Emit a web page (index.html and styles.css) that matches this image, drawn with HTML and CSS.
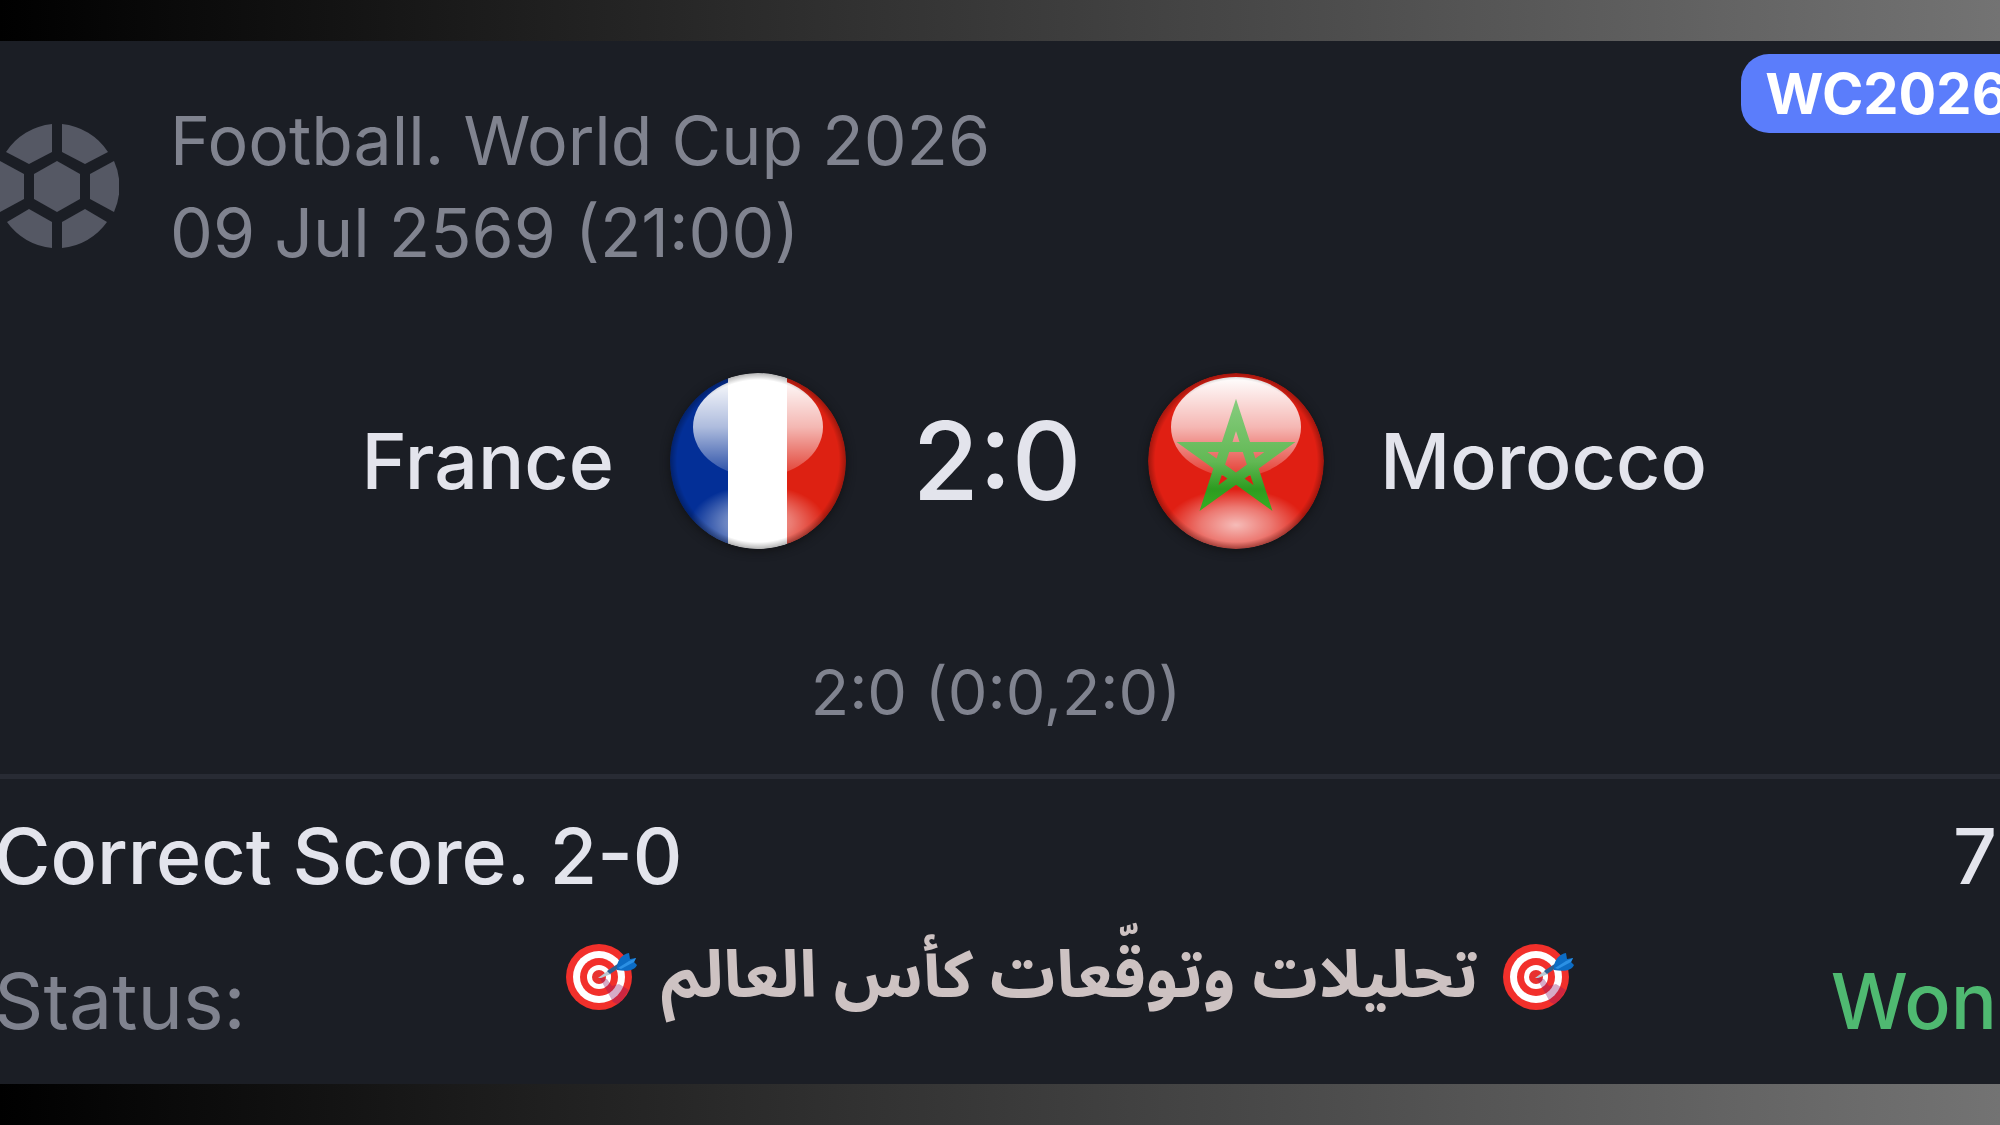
FILE: index.html
```html
<!DOCTYPE html>
<html lang="en">
<head>
<meta charset="utf-8">
<meta name="viewport" content="width=device-width, initial-scale=1">
<title>World Cup 2026: France – Morocco</title>
<link rel="stylesheet" href="styles.css">
</head>
<body>
<svg width="0" height="0" class="defs" aria-hidden="true">
  <defs>
    <linearGradient id="gloss" x1="0" y1="0" x2="0" y2="1">
      <stop offset="0" stop-color="#fff" stop-opacity="1"/>
      <stop offset="0.5" stop-color="#fff" stop-opacity="0.68"/>
      <stop offset="1" stop-color="#fff" stop-opacity="0.12"/>
    </linearGradient>
    <radialGradient id="glow">
      <stop offset="0" stop-color="#fff" stop-opacity="0.7"/>
      <stop offset="0.5" stop-color="#fff" stop-opacity="0.4"/>
      <stop offset="1" stop-color="#fff" stop-opacity="0"/>
    </radialGradient>
    <radialGradient id="rim">
      <stop offset="0.92" stop-color="#000" stop-opacity="0"/>
      <stop offset="1" stop-color="#000" stop-opacity="0.3"/>
    </radialGradient>
    <linearGradient id="green" gradientUnits="userSpaceOnUse" x1="0" y1="-60" x2="0" y2="50">
      <stop offset="0" stop-color="#86cc7e"/>
      <stop offset="0.55" stop-color="#62b854"/>
      <stop offset="0.8" stop-color="#2d9c20"/>
      <stop offset="1" stop-color="#36b022"/>
    </linearGradient>
    <clipPath id="disc"><circle r="88"/></clipPath>
    <clipPath id="board"><circle cx="34" cy="36" r="33"/></clipPath>
    <symbol id="target" viewBox="0 0 72 72">
      <circle cx="34" cy="36" r="33" fill="#f2302b"/>
      <circle cx="34" cy="36" r="26" fill="#fff"/>
      <circle cx="34" cy="36" r="19" fill="#f2302b"/>
      <circle cx="34" cy="36" r="12" fill="#fff"/>
      <circle cx="34" cy="36" r="7" fill="#e8322f"/>
      <path d="M34 36L42 38L47 45L54 43L64 49L54 64L48 61L42 50Z" fill="#8e1766" fill-opacity="0.36" clip-path="url(#board)"/>
      <path d="M33 37L44 29L46 33L36 37Z" fill="#b9c8d3"/>
      <path d="M42 30L54 22L57 25L45 33Z" fill="#2d5f91"/>
      <path d="M52 25C53 18 58 13 64 12L65 18L71 17L69 21L72 24C70 29 63 31 52 29Z" fill="#0c6cc4"/>
      <path d="M53 27L64 20L71 17L69 21L56 28Z" fill="#2b90e4"/>
    </symbol>
  </defs>
</svg>
<main class="page">
  <article class="ticket">
    <header class="event">
      <svg class="event-icon" viewBox="-62 -62 124 124" aria-hidden="true">
        <path d="M0-25L23-12V13L0 26L-23 13V-12Z"/>
        <path d="M-5-62V-34L-28-22L-51-34A62 62 0 0 1-5-62Z"/>
        <path d="M5-62V-34L28-22L51-34A62 62 0 0 0 5-62Z"/>
        <path d="M-5 62V36L-28 23L-50 36A62 62 0 0 0-5 62Z"/>
        <path d="M5 62V36L28 23L50 36A62 62 0 0 1 5 62Z"/>
        <path d="M57-25L33-12V13L57 26A62 62 0 0 0 57-25Z"/>
        <path d="M-57-25L-33-12V13L-57 26A62 62 0 0 1-57-25Z"/>
      </svg>
      <div class="event-text">
        <div>Football. World Cup 2026</div>
        <div>09 Jul 2569 (21:00)</div>
      </div>
      <span class="badge">WC2026</span>
    </header>
    <section class="match">
      <span class="team home">France</span>
      <svg class="flag" viewBox="-88 -88 176 176" role="img" aria-label="Flag of France">
        <g clip-path="url(#disc)">
          <path d="M-88-88H-29V88H-88Z" fill="#032f97"/>
          <path d="M29-88H88V88H29Z" fill="#dd2112"/>
          <ellipse cy="62" rx="68" ry="38" fill="url(#glow)"/>
          <path d="M-30-88H29V88H-30Z" fill="#fff"/>
          <ellipse cy="-34" rx="65" ry="50" fill="url(#gloss)"/>
          <circle r="88" fill="url(#rim)"/>
        </g>
      </svg>
      <strong class="score">2:0</strong>
      <svg class="flag" viewBox="-88 -88 176 176" role="img" aria-label="Flag of Morocco">
        <g clip-path="url(#disc)">
          <circle r="88" fill="#e01f13"/>
          <ellipse cy="64" rx="70" ry="36" fill="url(#glow)"/>
          <ellipse cy="-34" rx="65" ry="50" fill="url(#gloss)"/>
          <path d="M0-46L27 37L-44-14H44L-27 37Z" fill="none" stroke="url(#green)" stroke-width="10"/>
          <circle r="88" fill="url(#rim)"/>
        </g>
      </svg>
      <span class="team">Morocco</span>
    </section>
    <div class="periods">2:0 (0:0,2:0)</div>
    <section class="bet">
      <div class="row outcome">
        <span>Correct Score. 2-0</span>
        <span>7</span>
      </div>
      <div class="row status">
        <span class="label">Status:</span>
        <div class="caption" lang="ar" dir="rtl">
          <svg class="target" aria-hidden="true"><use href="#target"/></svg>
          <span>تحليلات وتوقّعات كأس العالم</span>
          <svg class="target" aria-hidden="true"><use href="#target"/></svg>
        </div>
        <span class="won">Won</span>
      </div>
    </section>
  </article>
</main>
</body>
</html>
```
FILE: styles.css
```css
* {
  box-sizing: border-box;
}

body {
  margin: 0;
  background: linear-gradient(to right, #000, #737373);
  font-family: Inter, "Liberation Sans", sans-serif;
  overflow-x: hidden;
}

.defs {
  position: absolute;
}

.page {
  min-height: 100vh;
  padding: 41px 0;
}

.ticket {
  background: #1b1e25;
  color: #e3e4ec;
  overflow: hidden;
}

.event {
  position: relative;
  display: flex;
  align-items: center;
  gap: 51px;
  padding-top: 53px;
  margin-left: -5px;
  color: #80838f;
  font-size: 68px;
  line-height: 92px;
}

.event-icon {
  width: 124px;
  height: 124px;
  flex: none;
  fill: #555864;
}

.badge {
  position: absolute;
  top: 13px;
  right: -32px;
  padding: 2px 24px 0;
  border-radius: 28px;
  background: #5b7dfb;
  color: #fff;
  font-size: 56px;
  font-weight: 700;
  line-height: 77px;
}

.match {
  display: grid;
  grid-template-columns: 1fr auto auto auto 1fr;
  align-items: center;
  margin-top: 95px;
  padding-right: 6px;
}

.team {
  margin: 0 56px;
  font-size: 77px;
  font-weight: 500;
  line-height: 100px;
}

.home {
  text-align: right;
}

.flag {
  width: 176px;
  height: 176px;
  border-radius: 50%;
  box-shadow: 0 2px 10px #111214;
}

.score {
  min-width: 302px;
  text-align: center;
  font-size: 108px;
  font-weight: 500;
  line-height: 132px;
}

.periods {
  margin-top: 97px;
  padding-right: 8px;
  color: #80838f;
  font-size: 63px;
  line-height: 92px;
  text-align: center;
}

.bet {
  margin-top: 36px;
  padding: 27px 3px 33px 0;
  border-top: 5px solid #282b34;
  font-size: 77px;
  line-height: 100px;
}

.row {
  margin-left: -6px;
}

.outcome {
  display: flex;
  justify-content: space-between;
  font-weight: 500;
}

.status {
  display: grid;
  grid-template-columns: 571px auto 1fr;
  margin-top: 45px;
}

.label {
  color: #80838f;
}

.caption {
  display: flex;
  align-items: center;
  align-self: start;
  gap: 24px;
  height: 52px;
  color: #cdc2c2;
  font-family: "Noto Sans Arabic", "Noto Sans", "DejaVu Sans", sans-serif;
  font-size: 65px;
  font-weight: 700;
}

.target {
  width: 72px;
  height: 72px;
  flex: none;
}

.won {
  color: #4fb971;
  font-weight: 500;
  text-align: right;
}
```
